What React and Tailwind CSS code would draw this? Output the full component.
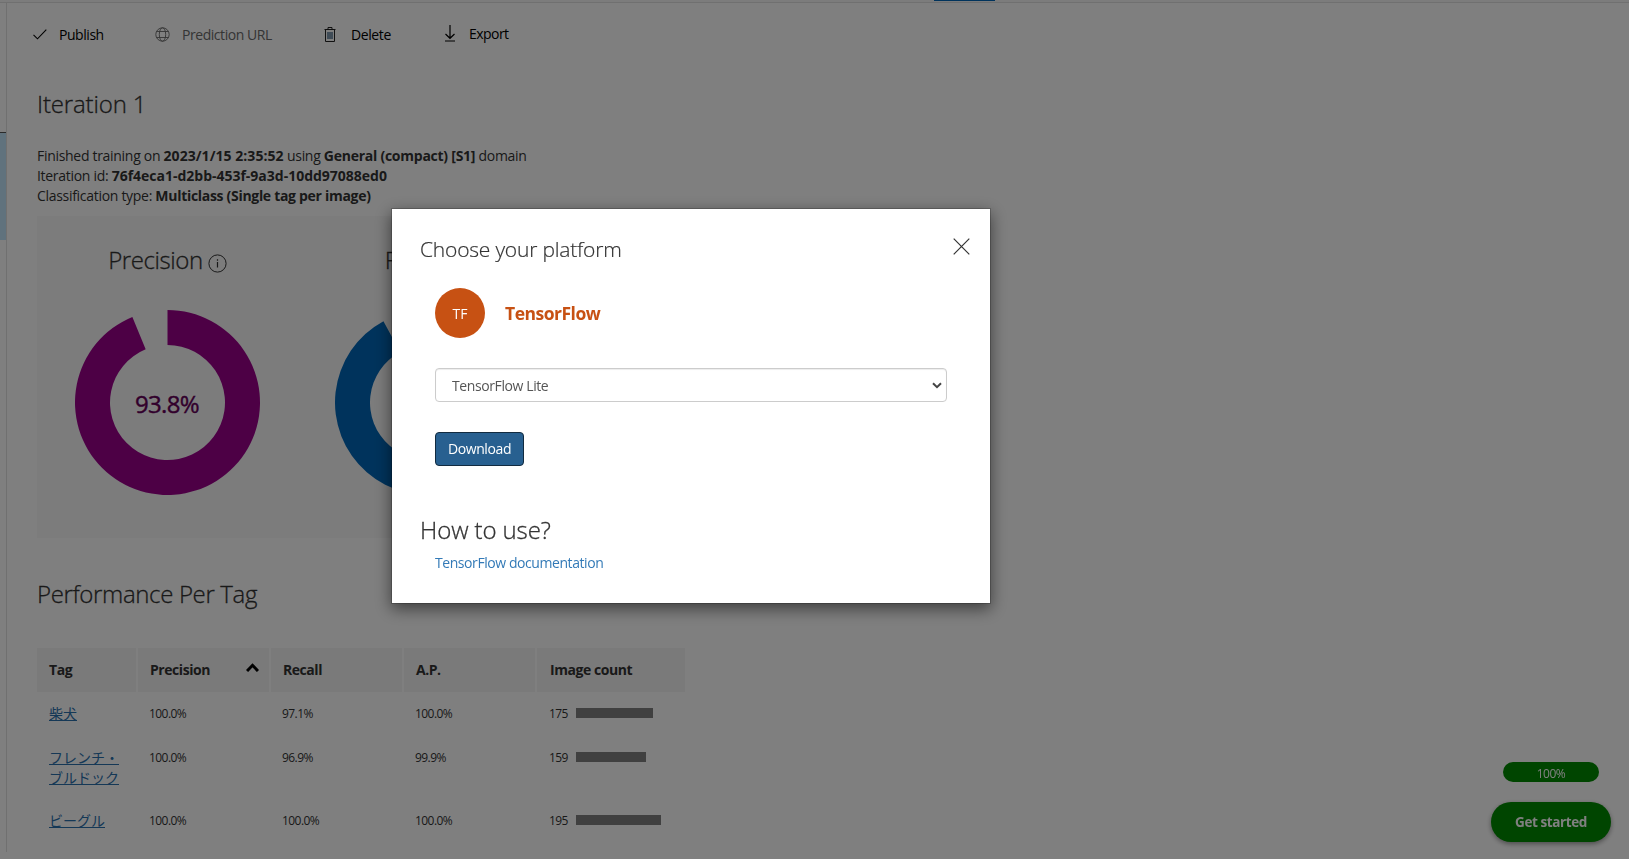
const tags = [
  { name: ['柴犬'], precision: '100.0%', recall: '97.1%', ap: '100.0%', count: 175, bar: 77 },
  { name: ['フレンチ・', 'ブルドック'], precision: '100.0%', recall: '96.9%', ap: '99.9%', count: 159, bar: 70 },
  { name: ['ビーグル'], precision: '100.0%', recall: '100.0%', ap: '100.0%', count: 195, bar: 85 },
];

function Donut({ value, color, textColor, label }) {
  const angle = (value / 100) * Math.PI * 2;
  const point = (r) => `${92.5 + r * Math.sin(angle)} ${92.5 - r * Math.cos(angle)}`;
  const d = `M92.5 0 A92.5 92.5 0 1 1 ${point(92.5)} L${point(57.5)} A57.5 57.5 0 1 0 92.5 35 Z`;

  return (
    <div className="grid h-[185px] w-[185px] place-items-center">
      <svg width="185" height="185" viewBox="0 0 185 185" className="col-start-1 row-start-1">
        <path d={d} fill={color} />
      </svg>
      <span
        className="col-start-1 row-start-1 mt-[3px] text-[24px] font-medium tracking-[-0.7px] [-webkit-text-stroke:0.4px]"
        style={{ color: textColor }}
      >
        {label}
      </span>
    </div>
  );
}

function InfoIcon() {
  return (
    <svg width="19" height="19" viewBox="0 0 19 19" fill="none" stroke="#333" className="mt-[10px] ml-[5px]">
      <circle cx="9.5" cy="9.5" r="8.6" />
      <path d="M9.5 8v5.5M9.5 5.2v1.5" strokeWidth="1.2" />
    </svg>
  );
}

function Toolbar() {
  return (
    <div className="flex h-5 items-center text-[14px] leading-5 text-black">
      <svg width="14" height="14" viewBox="0 0 14 14" fill="none" stroke="#000" strokeWidth="1.1">
        <path d="M0.5 6.8L4.5 10.8L13.3 1.6" />
      </svg>
      <span className="ml-3 w-[96px] tracking-[-0.45px]">Publish</span>
      <svg width="15" height="15" viewBox="0 0 15 15" fill="none" stroke="#6a6a6a" strokeWidth="0.9" className="mb-0.5">
        <circle cx="7.5" cy="7.5" r="6.7" />
        <ellipse cx="7.5" cy="7.5" rx="3.2" ry="6.7" />
        <path d="M1.5 4.5h12M1.5 10.5h12" />
      </svg>
      <span className="ml-[12px] w-[142px] tracking-[-0.45px] text-[#6a6a6a]">Prediction URL</span>
      <svg width="12" height="15" viewBox="0 0 12 15" fill="none" stroke="#222" className="mb-0.5">
        <path d="M0.5 2.5h11M4 2.5v-2h4v2M1.5 2.5v12h9v-12" />
        <path d="M4 5v7M6 5v7M8 5v7" stroke="#00335f" />
      </svg>
      <span className="ml-[15px] w-[93px] tracking-[-0.4px]">Delete</span>
      <svg width="12" height="17" viewBox="0 0 12 17" fill="none" stroke="#000" strokeWidth="1.2" className="mb-[3px]">
        <path d="M6 0v13M1.5 9L6 13.3L10.5 9M1 16h10" />
      </svg>
      <span className="mb-[2px] ml-[13px] tracking-[-0.55px]">Export</span>
    </div>
  );
}

function TagTable() {
  return (
    <div className="mt-[38px] w-[648px]">
      <div className="grid h-11 grid-cols-[99px_131px_131px_131px_148px] gap-x-0.5 text-[14px] leading-[44px] font-bold tracking-[-0.45px] text-[#333]">
        <div className="bg-[#f4f4f4] pl-3">Tag</div>
        <div className="flex justify-between bg-[#f4f4f4] pl-3">
          <span>Precision</span>
          <svg width="13" height="9" viewBox="0 0 13 9" fill="none" stroke="#000" strokeWidth="3" className="mt-[15px] mr-2.5">
            <path d="M1 8L6.5 2.3L12 8" />
          </svg>
        </div>
        <div className="bg-[#f4f4f4] pl-3">Recall</div>
        <div className="bg-[#f4f4f4] pl-3">A.P.</div>
        <div className="bg-[#f4f4f4] pl-[13px]">Image count</div>
      </div>
      {tags.map((tag) => (
        <div
          key={tag.name[0]}
          className="grid grid-cols-[99px_131px_131px_131px_148px] gap-x-0.5 pt-3 pb-3 text-[12px] leading-5 tracking-[-0.55px] text-[#333]"
        >
          <a className="-mt-px pl-3 font-['Noto_Sans_CJK_JP',sans-serif] text-[14px] tracking-normal text-[#2a70ad] underline underline-offset-1">
            {tag.name.map((line) => (
              <div key={line} className="h-5">{line}</div>
            ))}
          </a>
          <div className="pl-[11px]">{tag.precision}</div>
          <div className="pl-[11px]">{tag.recall}</div>
          <div className="pl-[11px]">{tag.ap}</div>
          <div className="flex pl-3">
            <span className="w-[27px]">{tag.count}</span>
            <div className="mt-[4px] h-2.5 bg-[#808080]" style={{ width: tag.bar }} />
          </div>
        </div>
      ))}
    </div>
  );
}

function PlatformDialog() {
  return (
    <div className="fixed top-[208px] left-[391px] h-[396px] w-[600px] border border-black/20 bg-white bg-clip-padding pl-7 shadow-[0_5px_15px_rgba(0,0,0,0.5)]">
      <div className="flex justify-between pt-[24px] pr-5">
        <h2 className="text-[21px] leading-8 font-light tracking-[-0.2px] text-[#333] [-webkit-text-stroke:0.2px]">
          Choose your platform
        </h2>
        <svg width="17" height="17" viewBox="0 0 17 17" stroke="#333" strokeWidth="1.2" className="mt-[5px]">
          <path d="M0.7 0.7L16.3 16.3M16.3 0.7L0.7 16.3" />
        </svg>
      </div>
      <div className="mt-[23px] ml-[15px] flex items-center">
        <div className="flex h-[50px] w-[50px] items-center justify-center rounded-full bg-[#c75113] pt-px text-[14px] text-white">
          TF
        </div>
        <span className="ml-5 text-[17.5px] font-bold tracking-[-0.5px] text-[#c75113]">TensorFlow</span>
      </div>
      <div className="mt-[30px] ml-[15px] flex h-[34px] w-[512px] items-center justify-between rounded border border-[#ccc] pr-1 pl-4 text-[14px] text-[#555] shadow-[inset_0_1px_1px_rgba(0,0,0,0.075)]">
        <span className="tracking-[-0.4px]">TensorFlow Lite</span>
        <svg width="10" height="7" viewBox="0 0 10 7" fill="none" stroke="#444" strokeWidth="2">
          <path d="M1 1.2L5 5.2L9 1.2" />
        </svg>
      </div>
      <button className="mt-[30px] ml-[15px] block h-[34px] w-[89px] rounded border border-[#122b40] bg-[#286090] pb-0.5 text-[14px] tracking-[-0.4px] text-white">
        Download
      </button>
      <h3 className="mt-[48px] text-[24px] leading-8 font-light tracking-[-0.1px] text-[#333] [-webkit-text-stroke:0.3px]">
        How to use?
      </h3>
      <a className="ml-[15px] block pt-[7px] text-[14px] leading-5 tracking-[-0.43px] text-[#337ab7]">TensorFlow documentation</a>
    </div>
  );
}

export default function App() {
  return (
    <div className="h-[859px] w-full overflow-hidden bg-white font-['Open_Sans','Noto_Sans_CJK_JP',sans-serif]">
      <div className="flex h-[3px] flex-col border-b border-[#e0e0e0] bg-[#f8f8f8]">
        <div className="ml-[934px] h-px w-[61px] bg-[#0067b8]" />
      </div>
      <div className="flex h-[849px]">
        <div className="w-[7px] border-r border-[#e0e0e0] pt-[129px]">
          <div className="h-[108px] border-t border-[#555] bg-[#c0e5fb]" />
        </div>
        <main className="pt-[22px] pl-[30px] text-[#333]">
          <div className="-ml-1">
            <Toolbar />
          </div>
          <h1 className="mt-[43px] text-[24px] leading-8 font-light tracking-[-0.15px] text-[#333] [-webkit-text-stroke:0.3px]">
            Iteration 1
          </h1>
          <div className="mt-[26px] text-[14px] leading-5 tracking-[-0.3px]">
            <p>
              Finished training on <b className="tracking-[0.05px]">2023/1/15 2:35:52</b> using{' '}
              <b className="tracking-[-0.25px]">General (compact) [S1]</b> domain
            </p>
            <p>
              Iteration id: <b className="tracking-[-0.01px]">76f4eca1-d2bb-453f-9a3d-10dd97088ed0</b>
            </p>
            <p>
              Classification type: <b>Multiclass (Single tag per image)</b>
            </p>
          </div>
          <section className="mt-[10px] flex h-[322px] w-[810px] gap-[75px] bg-[#f8f8f8] pt-7 pl-[37.5px]">
            <div className="w-[185px]">
              <div className="mb-[34px] flex justify-center pl-px text-[24px] leading-8 font-light tracking-[-0.4px] text-[#333] [-webkit-text-stroke:0.3px]">
                Precision <InfoIcon />
              </div>
              <Donut value={93.8} color="#9b008b" textColor="#640059" label="93.8%" />
            </div>
            <div className="w-[185px]">
              <div className="mb-[34px] flex justify-center text-[24px] leading-8 font-light tracking-[-0.3px] text-[#333] [-webkit-text-stroke:0.3px]">
                Recall <InfoIcon />
              </div>
              <Donut value={92.1} color="#0067b8" textColor="#004072" label="92.1%" />
            </div>
          </section>
          <h1 className="mt-[40px] text-[24px] leading-8 font-light tracking-[-0.35px] text-[#333] [-webkit-text-stroke:0.3px]">
            Performance Per Tag
          </h1>
          <TagTable />
        </main>
      </div>
      <div className="fixed right-[18px] bottom-[17px] flex flex-col items-center gap-5">
        <div className="h-5 w-24 rounded-full bg-[#008a00] text-center text-[12px] leading-[23px] tracking-[-0.5px] text-white">100%</div>
        <div className="h-10 w-[120px] rounded-full bg-[#008a00] text-center text-[13.5px] leading-10 font-bold tracking-[-0.4px] text-white shadow-[0_2px_5px_rgba(0,0,0,0.4)]">
          Get started
        </div>
      </div>
      <div className="fixed inset-0 bg-black/50" />
      <PlatformDialog />
    </div>
  );
}
